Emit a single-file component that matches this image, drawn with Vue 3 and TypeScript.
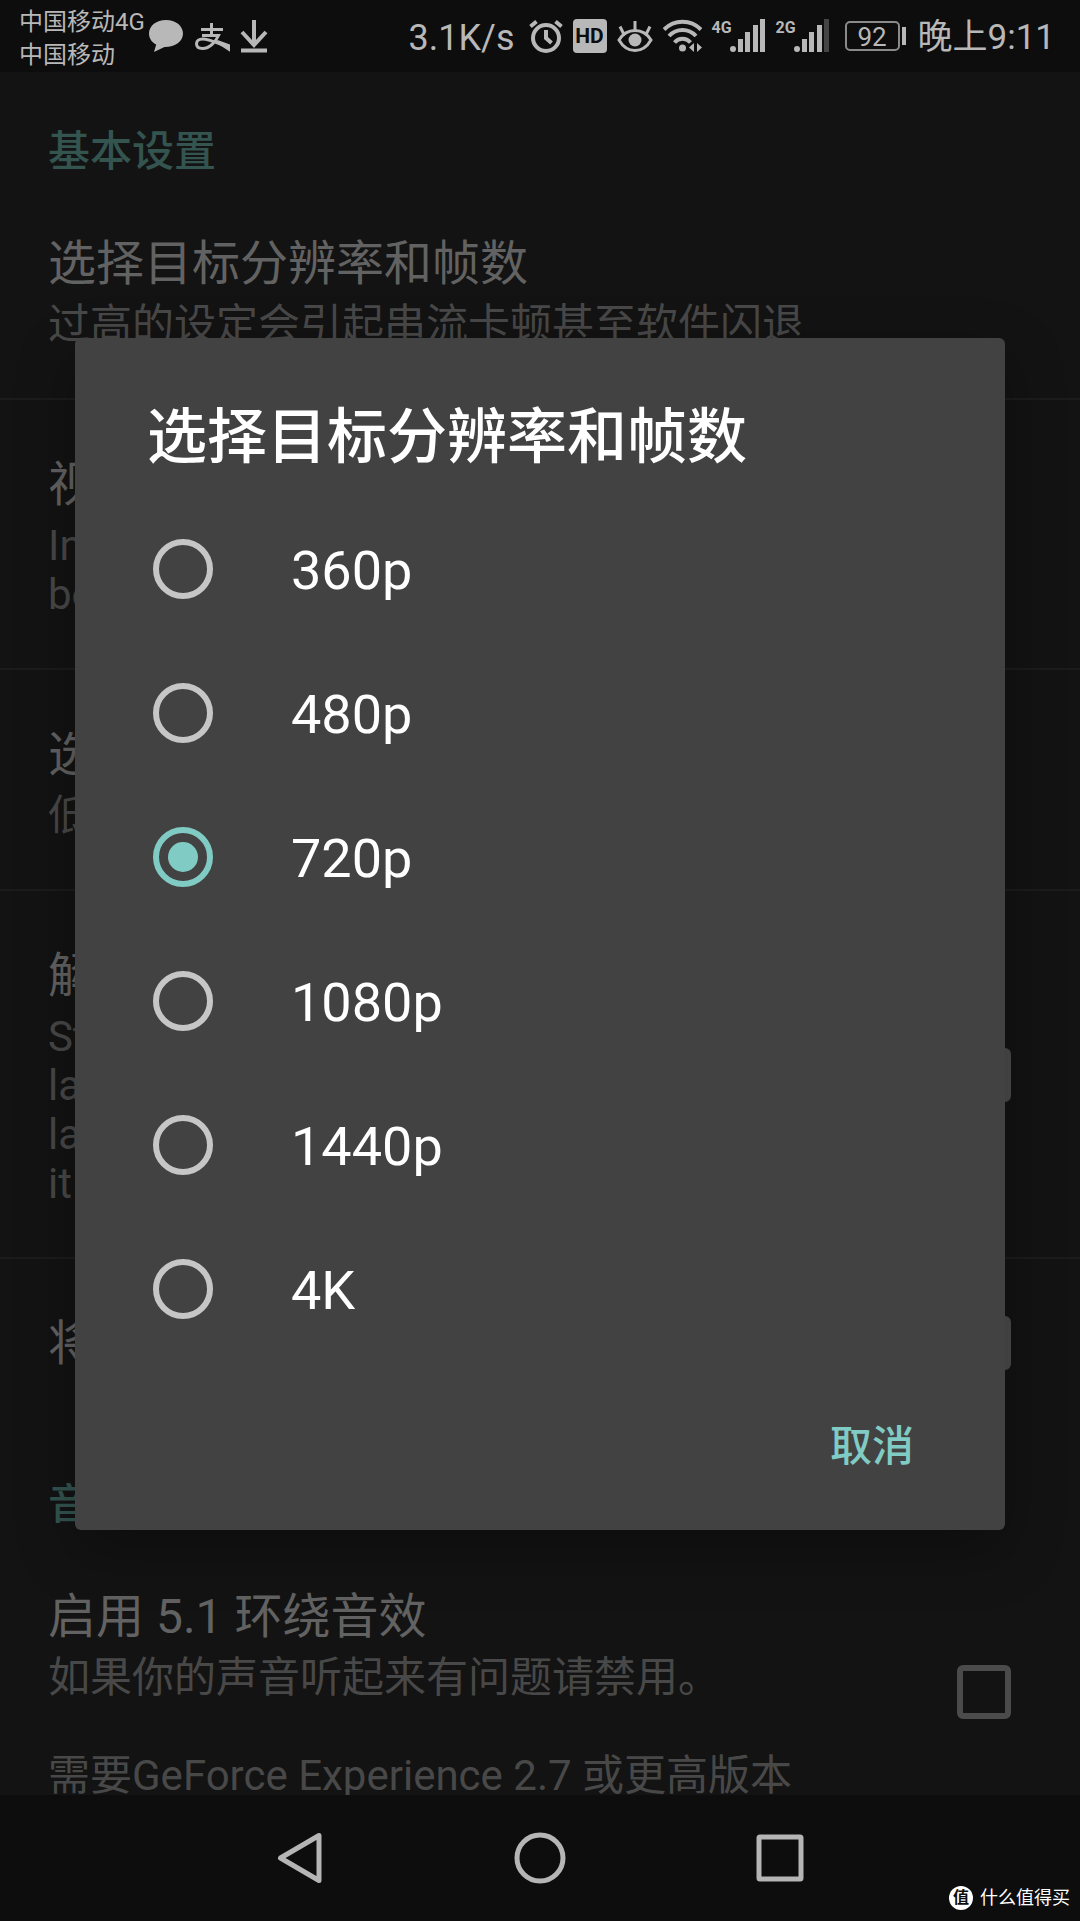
<script setup lang="ts">
import { ref } from 'vue'

interface Preference {
  title: string
  summary?: string
  toggle?: boolean
}

interface PreferenceGroup {
  name: string
  items: Preference[]
}

const groups: PreferenceGroup[] = [
  {
    name: '基本设置',
    items: [
      { title: '选择目标分辨率和帧数', summary: '过高的设定会引起串流卡顿甚至软件闪退' },
      { title: '视频码率', summary: 'Increase for better image quality. Decrease for\nbetter performance' },
      { title: '选择码率', summary: '低码率会减少卡顿' },
      {
        title: '解码设置',
        summary: 'Streaming at a\nlarge size\nlags when\nit is on',
        toggle: true,
      },
      { title: '将画面拉伸至全屏', toggle: true },
    ],
  },
  {
    name: '音频设置',
    items: [
      {
        title: '启用 5.1 环绕音效',
        summary: '如果你的声音听起来有问题请禁用。\n\n需要GeForce Experience 2.7 或更高版本',
        toggle: true,
      },
    ],
  },
]

const resolutions: string[] = ['360p', '480p', '720p', '1080p', '1440p', '4K']
const selected = ref<string>('720p')

const signals = [
  { label: '4G', level: 5 },
  { label: '2G', level: 4 },
]
</script>

<template>
  <div class="screen">
    <header class="status">
      <div class="carriers">
        <span>中国移动4G</span>
        <span>中国移动</span>
      </div>
      <div class="notices">
        <svg width="36" height="34" viewBox="0 0 36 34" fill="currentColor" aria-hidden="true">
          <path d="M18 1C8.500 1 1 6.800 1 14.500c0 5 2.800 8.800 7.200 11.100L6 33l10.500-5C27 28.200 35 22.500 35 14.500 35 6.800 27.500 1 18 1z" />
        </svg>
        <svg width="36" height="34" viewBox="0 0 36 34" fill="none" stroke="currentColor" stroke-width="3" aria-hidden="true">
          <path d="M7 10.500h22M17.500 4v12M8 16.500h16.500C22 22 16 29.500 8.500 29.500c-4 0-6-1.900-6-4.700 0-2.900 2.700-4.800 6-4.800C15 20 22 23.500 34 28" />
          <path d="M23 22.500l11.500 4v3.500z" fill="currentColor" />
        </svg>
        <svg width="28" height="34" viewBox="0 0 28 34" fill="none" stroke="currentColor" stroke-width="4" aria-hidden="true">
          <path d="M14 1v25M2 13l12 13 12-13M1 31.500h26" />
        </svg>
      </div>
      <div class="system">
        <span class="speed">3.1K/s</span>
        <svg width="34" height="34" viewBox="0 0 34 34" fill="none" stroke="currentColor" stroke-width="4" aria-hidden="true">
          <circle cx="17" cy="19" r="13" />
          <path d="M17 11v8l5.500 5M1.500 7.500l6-5M32.500 7.500l-6-5" />
        </svg>
        <span class="hd">HD</span>
        <svg width="36" height="34" viewBox="0 0 36 34" fill="none" stroke="currentColor" stroke-width="3" aria-hidden="true">
          <path d="M2 21c4-6.500 9.500-9.500 16-9.500S30 14.500 34 21c-4 7-9.500 10.500-16 10.500S6 28 2 21zM18 11V2M6.500 14.500L3 7.500M29.500 14.500L33 7.500" />
          <circle cx="18" cy="21" r="6.500" fill="currentColor" stroke="none" />
        </svg>
        <svg width="39" height="34" viewBox="0 0 39 34" fill="none" stroke="currentColor" stroke-width="4" aria-hidden="true">
          <path d="M1 10.500C11 0 28 0 38 10.500M6 17c7.500-8 19.500-8 27 0M11.500 23.500c4.500-5 11.500-5 16 0" />
          <circle cx="19.500" cy="29" r="3.500" fill="currentColor" stroke="none" />
          <path d="M31 24v9l-5-4.500zM34 24v9l5-4.500z" fill="currentColor" stroke="none" />
        </svg>
        <span v-for="signal in signals" :key="signal.label" class="signal">
          <span class="network">{{ signal.label }}</span>
          <svg width="36" height="34" viewBox="0 0 36 34" fill="currentColor" aria-hidden="true">
            <circle cx="3" cy="30" r="3" />
            <rect x="8" y="20" width="5" height="13" />
            <rect x="15" y="13" width="5" height="20" />
            <rect x="23" y="6" width="5" height="27" />
            <rect x="30" y="0" width="5" height="33" :class="{ dim: signal.level < 5 }" />
          </svg>
        </span>
        <span class="battery">
          <span class="charge">92</span>
          <span class="nub"></span>
        </span>
        <time>晚上9:11</time>
      </div>
    </header>

    <main class="content">
      <section v-for="group in groups" :key="group.name">
        <h2>{{ group.name }}</h2>
        <label v-for="item in group.items" :key="item.title" class="preference">
          <span class="texts">
            <span class="name">{{ item.title }}</span>
            <span v-if="item.summary" class="summary">{{ item.summary }}</span>
          </span>
          <input v-if="item.toggle" type="checkbox" />
        </label>
      </section>

      <div class="overlay">
        <form class="dialog" role="dialog" aria-labelledby="dialog-title" @submit.prevent>
          <h1 id="dialog-title">选择目标分辨率和帧数</h1>
          <label v-for="option in resolutions" :key="option" class="option">
            <input v-model="selected" type="radio" name="resolution" :value="option" />
            <span>{{ option }}</span>
          </label>
          <div class="actions">
            <button type="button">取消</button>
          </div>
        </form>
      </div>
    </main>

    <nav class="keys">
      <button type="button" aria-label="返回">
        <svg width="50" height="54" viewBox="0 0 50 54" aria-hidden="true">
          <path d="M44 4.500v45L5.500 27z" />
        </svg>
      </button>
      <button type="button" aria-label="主屏幕">
        <svg width="54" height="54" viewBox="0 0 54 54" aria-hidden="true">
          <circle cx="27" cy="27" r="23" />
        </svg>
      </button>
      <button type="button" aria-label="最近任务">
        <svg width="54" height="54" viewBox="0 0 54 54" aria-hidden="true">
          <rect x="6" y="6" width="42" height="42" rx="1" />
        </svg>
      </button>
      <div class="watermark">
        <span class="badge">值</span>
        <span>什么值得买</span>
      </div>
    </nav>
  </div>
</template>

<style>
body {
  margin: 0;
  background: #131313;
}
</style>

<style scoped>
.screen {
  display: flex;
  flex-direction: column;
  height: 100vh;
  overflow: hidden;
  font-family: Roboto, "Noto Sans CJK SC", sans-serif;
  background: #131313;
}

.status {
  display: flex;
  align-items: center;
  flex: none;
  height: 72px;
  padding: 0 25px 0 19px;
  box-sizing: border-box;
  color: #b8b8b8;
  background: #0d0d0d;
}

.status svg {
  display: block;
  flex: none;
}

.carriers {
  display: flex;
  flex-direction: column;
  padding-top: 5px;
  font-size: 24px;
  line-height: 33px;
}

.notices {
  display: flex;
  gap: 10px;
  padding-left: 3px;
}

.system {
  display: flex;
  align-items: center;
  gap: 10px;
  margin-left: auto;
}

.speed,
time {
  padding-top: 4px;
  line-height: 40px;
}

.speed {
  margin-right: 4px;
  font-size: 36px;
}

time {
  font-size: 35px;
}

.hd {
  width: 34px;
  border-radius: 4px;
  color: #0d0d0d;
  background: #b8b8b8;
  font-size: 21px;
  font-weight: 700;
  line-height: 34px;
  text-align: center;
}

.signal {
  display: flex;
  align-items: flex-start;
}

.network {
  width: 18px;
  font-size: 16px;
  font-weight: 700;
  line-height: 17px;
}

.dim {
  fill: #444444;
}

.battery {
  display: flex;
  align-items: center;
  gap: 2px;
  margin-left: 5px;
  margin-right: 2px;
}

.charge {
  width: 55px;
  height: 30px;
  border: 2px solid #8a8a8a;
  border-radius: 5px;
  box-sizing: border-box;
  font-size: 26px;
  line-height: 28px;
  text-align: center;
}

.nub {
  width: 4px;
  height: 18px;
  background: #b8b8b8;
}

.content {
  position: relative;
  flex: 1;
  min-height: 0;
  overflow: hidden;
}

h2 {
  margin: 0;
  padding: 55px 48px 3px;
  color: #33544f;
  font-size: 42px;
  font-weight: 500;
  line-height: 49px;
}

.preference {
  display: flex;
  align-items: center;
  padding: 51px 69px 49px 48px;
  border-bottom: 2px solid #1c1c1c;
}

.preference:last-child {
  border-bottom: 0;
}

.texts {
  display: flex;
  flex: 1;
  flex-direction: column;
  gap: 4px;
  padding-top: 2px;
}

.name {
  color: #626262;
  font-size: 48px;
  line-height: 64px;
}

.summary {
  color: #484848;
  font-size: 42px;
  line-height: 49px;
  white-space: pre-line;
}

.preference input {
  flex: none;
  appearance: none;
  width: 54px;
  height: 54px;
  margin: 0;
  border: 6px solid #4b4b4b;
  border-radius: 6px;
}

.overlay {
  position: absolute;
  inset: 0;
  display: flex;
  align-items: center;
  padding: 0 75px;
}

.dialog {
  flex: 1;
  border-radius: 6px;
  color: #ffffff;
  background: #424242;
  box-shadow: 0 20px 60px rgba(0, 0, 0, 0.3);
}

h1 {
  margin: 0;
  padding: 65px 72px 24px;
  font-size: 60px;
  font-weight: 500;
  line-height: 70px;
}

.option {
  display: flex;
  align-items: center;
  gap: 78px;
  height: 144px;
  padding: 0 78px;
  font-size: 54px;
  line-height: 64px;
}

.option span {
  padding-top: 5px;
}

.option input {
  display: grid;
  place-content: center;
  flex: none;
  appearance: none;
  width: 60px;
  height: 60px;
  margin: 0;
  border: 6px solid #c6c6c6;
  border-radius: 50%;
}

.option input:checked {
  border-color: #80cbc4;
}

.option input:checked::before {
  content: "";
  width: 30px;
  height: 30px;
  border-radius: 50%;
  background: #80cbc4;
}

.actions {
  display: flex;
  justify-content: flex-end;
  padding: 32px 67px 29px;
}

.actions button {
  height: 108px;
  padding: 0 24px;
  border: 0;
  color: #80cbc4;
  background: none;
  font-family: inherit;
  font-size: 42px;
  font-weight: 500;
  line-height: 49px;
}

.keys {
  position: relative;
  display: flex;
  align-items: center;
  justify-content: center;
  flex: none;
  height: 126px;
  background: #0d0d0d;
}

.keys button {
  display: flex;
  align-items: center;
  justify-content: center;
  width: 240px;
  height: 126px;
  padding: 0;
  border: 0;
  background: none;
}

.keys svg {
  fill: none;
  stroke: #b5b5b5;
  stroke-width: 5;
  stroke-linejoin: round;
}

.watermark {
  position: absolute;
  right: 10px;
  bottom: 11px;
  display: flex;
  align-items: center;
  gap: 7px;
  color: #ffffff;
  font-size: 18px;
  line-height: 24px;
}

.badge {
  width: 24px;
  border-radius: 50%;
  color: #0d0d0d;
  background: #ffffff;
  font-size: 16px;
  font-weight: 700;
  text-align: center;
}
</style>
